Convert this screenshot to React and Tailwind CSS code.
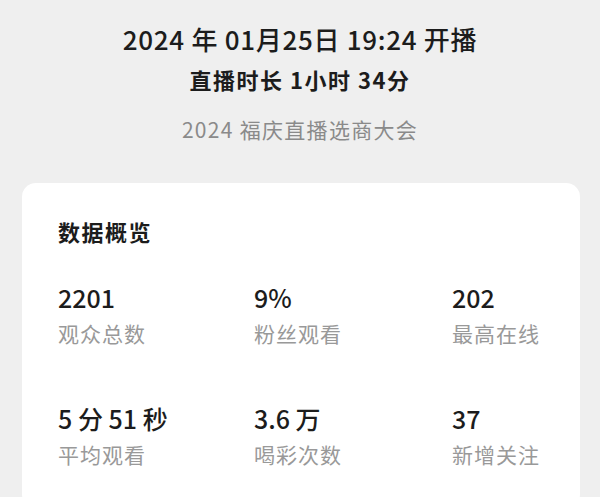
import React from 'react';

const stats = [
  { value: '2201', label: '观众总数' },
  { value: '9%', label: '粉丝观看' },
  { value: '202', label: '最高在线' },
  { value: '5 分 51 秒', label: '平均观看' },
  { value: '3.6 万', label: '喝彩次数' },
  { value: '37', label: '新增关注' },
];

export default function App() {
  return (
    <div
      className="min-h-[497px] h-[497px] overflow-hidden bg-[#efefef] pt-[21px]"
      style={{ fontFamily: '"Noto Sans CJK SC", "Noto Sans", sans-serif' }}
    >
      {/* Header */}
      <div className="text-center">
        <div className="text-[26px] leading-[36px] font-medium tracking-[0.7px] text-[#1c1c1c]">
          2024 年 01月25日 19:24 开播
        </div>
        <div className="mt-[7px] text-[22px] leading-[30px] font-semibold tracking-[1.5px] text-[#1c1c1c]">
          直播时长 1小时 34分
        </div>
        <div className="mt-[21px] text-[21px] leading-[28px] tracking-[1.3px] text-[#8a8a8a]">
          2024 福庆直播选商大会
        </div>
      </div>

      {/* Data card */}
      <div className="mt-[40px] ml-[22px] mr-[20px] rounded-[14px] bg-white pl-[36px] pt-[33px] pb-[40px]">
        <div className="text-[22px] leading-[30px] font-semibold tracking-[1.5px] text-[#1c1c1c]">数据概览</div>
        <div className="mt-[35px] grid grid-cols-[196px_198px_1fr] gap-y-[55px]">
          {stats.map((s) => (
            <div key={s.label}>
              <div className="text-[25px] leading-[32px] font-medium text-[#1c1c1c]">{s.value}</div>
              <div className="mt-[6px] text-[21px] leading-[28px] tracking-[1px] text-[#999999]">{s.label}</div>
            </div>
          ))}
        </div>
      </div>
    </div>
  );
}
